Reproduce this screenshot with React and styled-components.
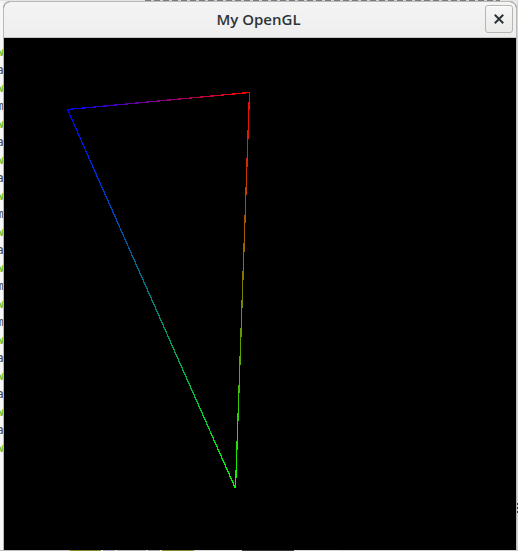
import React from 'react';
import styled, { createGlobalStyle } from 'styled-components';

const GlobalStyle = createGlobalStyle`
  html, body {
    margin: 0;
    padding: 0;
    background: #ececec;
    overflow: hidden;
  }
  * {
    box-sizing: border-box;
  }
`;

const termLines = [
  { tone: 'ok', text: 'warning: unused variable' },
  { tone: 'dim', text: 'at main.c:12' },
  { tone: 'ok', text: 'warning: implicit' },
  { tone: 'dim', text: 'make: leaving' },
  { tone: 'ok', text: 'warning: unused' },
  { tone: 'dim', text: 'at shader.c:40' },
  { tone: 'ok', text: 'warning: unused' },
  { tone: 'dim', text: 'at main.c:88' },
  { tone: 'ok', text: 'warning: deprecated' },
  { tone: 'dim', text: 'make: entering' },
  { tone: 'ok', text: 'warning: unused' },
  { tone: 'dim', text: 'at main.c:19' },
  { tone: 'ok', text: 'warning: unused' },
  { tone: 'dim', text: 'make: leaving' },
  { tone: 'ok', text: 'warning: implicit' },
  { tone: 'dim', text: 'make: entering' },
  { tone: 'ok', text: 'warning: unused' },
  { tone: 'dim', text: 'at main.c:54' },
  { tone: 'ok', text: 'warning: unused' },
  { tone: 'dim', text: 'at main.c:61' },
  { tone: 'ok', text: 'warning: unused' },
  { tone: 'dim', text: 'at main.c:70' },
  { tone: 'ok', text: 'warning: unused' },
];

const taskbar = [
  { w: 70, c: '#bdbdbd' },
  { w: 31, c: '#8c8a2e' },
  { w: 2, c: '#e6e6e6' },
  { w: 12, c: '#a8a8a8' },
  { w: 2, c: '#e6e6e6' },
  { w: 29, c: '#b4b4b4' },
  { w: 2, c: '#e6e6e6' },
  { w: 12, c: '#a8a8a8' },
  { w: 2, c: '#e6e6e6' },
  { w: 32, c: '#8c8a2e' },
  { w: 48, c: '#d6d6d6' },
  { w: 52, c: '#3a3a3a' },
  { w: 47, c: '#d6d6d6' },
  { w: 177, c: '#cfcfcf' },
];

// vertex positions inside the 512x512 GL viewport
const verts = {
  a: { x: 63, y: 71, color: '#0000ff' },
  b: { x: 245, y: 54, color: '#ff0000' },
  c: { x: 231, y: 450, color: '#00ff00' },
};

const edges = [
  ['ab', verts.a, verts.b],
  ['bc', verts.b, verts.c],
  ['ca', verts.c, verts.a],
];

const Triangle = () => (
  <svg width="512" height="512" viewBox="0 0 512 512">
    <defs>
      {edges.map(([id, p, q]) => (
        <linearGradient
          key={id}
          id={`edge-${id}`}
          gradientUnits="userSpaceOnUse"
          x1={p.x}
          y1={p.y}
          x2={q.x}
          y2={q.y}
        >
          <stop offset="0" stopColor={p.color} />
          <stop offset="1" stopColor={q.color} />
        </linearGradient>
      ))}
    </defs>
    {edges.map(([id, p, q]) => (
      <line
        key={id}
        x1={p.x + 0.5}
        y1={p.y + 0.5}
        x2={q.x + 0.5}
        y2={q.y + 0.5}
        stroke={`url(#edge-${id})`}
        strokeWidth="1.3"
        shapeRendering="crispEdges"
      />
    ))}
  </svg>
);

const App = () => {
  return (
    <>
      <GlobalStyle />
      <Desktop>
        <TopStrip>
          <TopText />
        </TopStrip>
        <Middle>
          <Terminal>
            {termLines.map((l, i) => (
              <TermLine key={i} $tone={l.tone}>
                {l.text}
              </TermLine>
            ))}
          </Terminal>
          <Window>
            <TitleBar>
              <span />
              <Title>My OpenGL</Title>
              <CloseButton aria-label="Close">
                <svg width="10" height="10" viewBox="0 0 10 10">
                  <path
                    d="M1.5 1.5 L8.5 8.5 M8.5 1.5 L1.5 8.5"
                    stroke="#2e3436"
                    strokeWidth="2"
                    strokeLinecap="square"
                  />
                </svg>
              </CloseButton>
            </TitleBar>
            <Canvas>
              <Triangle />
            </Canvas>
          </Window>
          <RightStrip>
            <RightMark />
          </RightStrip>
        </Middle>
        <Taskbar>
          {taskbar.map((s, i) => (
            <TaskSeg key={i} $w={s.w} $c={s.c} />
          ))}
        </Taskbar>
      </Desktop>
    </>
  );
};

const Desktop = styled.div`
  width: 518px;
  height: 551px;
  display: flex;
  flex-direction: column;
  background: #ececec;
`;

const TopStrip = styled.div`
  height: 1px;
  display: flex;
  padding-left: 145px;
  background: #e4e4e4;
`;

const TopText = styled.div`
  width: 355px;
  height: 1px;
  background: repeating-linear-gradient(
    to right,
    #7a7a7a 0 6px,
    #d0d0d0 6px 9px
  );
`;

const Middle = styled.div`
  flex: 1;
  display: flex;
  min-height: 0;
`;

const Terminal = styled.div`
  width: 3px;
  overflow: hidden;
  background: #f7f7f7;
  padding-top: 42px;
  display: flex;
  flex-direction: column;
`;

const TermLine = styled.div`
  font-family: 'DejaVu Sans Mono', monospace;
  font-size: 13px;
  line-height: 18px;
  white-space: nowrap;
  margin-left: -4px;
  color: ${({ $tone }) => ($tone === 'ok' ? '#73c11a' : '#4a4a4a')};
  font-weight: ${({ $tone }) => ($tone === 'ok' ? 700 : 400)};
`;

const Window = styled.div`
  width: 514px;
  display: flex;
  flex-direction: column;
  border: 1px solid #b9b9b6;
  border-bottom: none;
  border-radius: 7px 7px 0 0;
  overflow: hidden;
  background: #000;
`;

const TitleBar = styled.div`
  height: 36px;
  display: grid;
  grid-template-columns: 1fr auto 1fr;
  align-items: center;
  padding-right: 3px;
  background: linear-gradient(#f4f4f4, #eeeeee);
  border-bottom: 1px solid #c6c6c3;
`;

const Title = styled.div`
  font-family: 'Open Sans', 'Noto Sans', sans-serif;
  font-size: 15px;
  font-weight: 600;
  color: #2e3436;
  padding-bottom: 1px;
`;

const CloseButton = styled.button`
  justify-self: end;
  width: 28px;
  height: 28px;
  margin-top: -1px;
  padding: 0;
  display: flex;
  align-items: center;
  justify-content: center;
  border: 1px solid #b6b6b3;
  border-radius: 3px;
  background: linear-gradient(#f6f6f6, #ebebea);
  box-shadow: inset 0 1px #ffffff;
`;

const Canvas = styled.div`
  width: 512px;
  height: 512px;
  background: #000;
  line-height: 0;
`;

const RightStrip = styled.div`
  width: 1px;
  background: #d6d6d6;
  display: flex;
  flex-direction: column;
  padding-top: 502px;
`;

const RightMark = styled.div`
  height: 10px;
  background: repeating-linear-gradient(#2a2ab8 0 2px, #d6d6d6 2px 4px);
`;

const Taskbar = styled.div`
  height: 1px;
  display: flex;
  background: #cfcfcf;
`;

const TaskSeg = styled.div`
  width: ${({ $w }) => $w}px;
  height: 1px;
  background: ${({ $c }) => $c};
`;

export default App;
